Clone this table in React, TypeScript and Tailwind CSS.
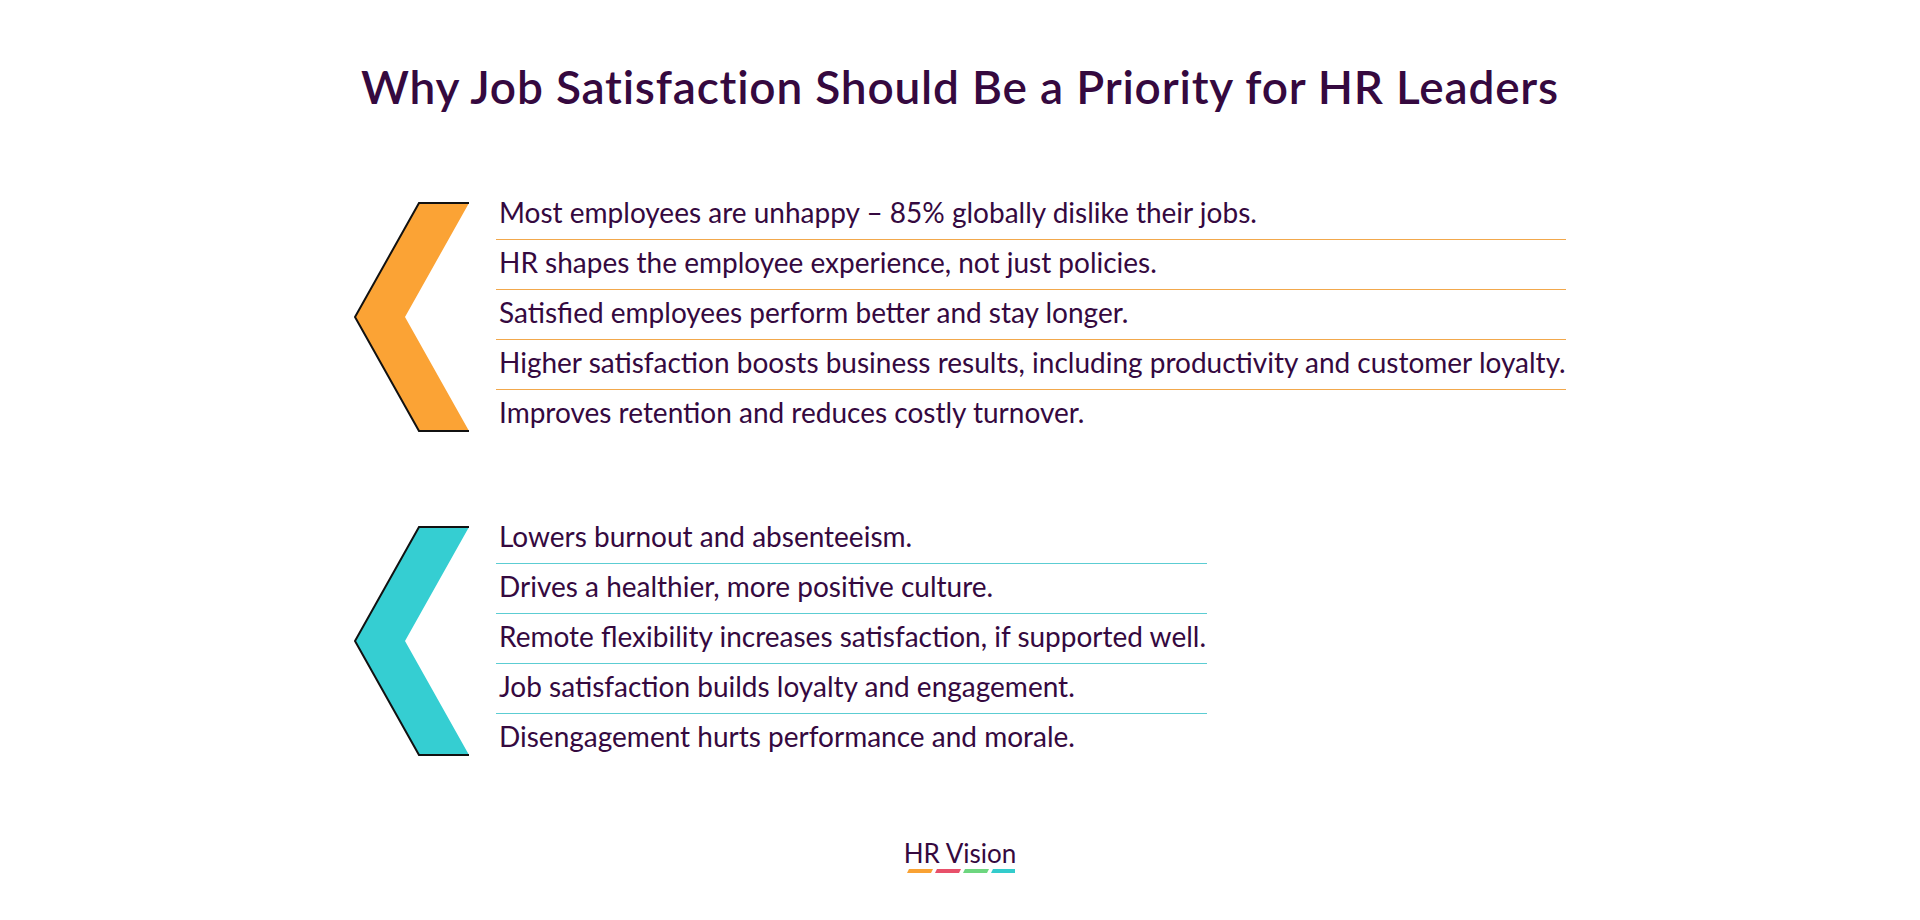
const orangeItems = [
  "Most employees are unhappy – 85% globally dislike their jobs.",
  "HR shapes the employee experience, not just policies.",
  "Satisfied employees perform better and stay longer.",
  "Higher satisfaction boosts business results, including productivity and customer loyalty.",
  "Improves retention and reduces costly turnover.",
]

const tealItems = [
  "Lowers burnout and absenteeism.",
  "Drives a healthier, more positive culture.",
  "Remote flexibility increases satisfaction, if supported well.",
  "Job satisfaction builds loyalty and engagement.",
  "Disengagement hurts performance and morale.",
]

function Chevron({ fill }: { fill: string }) {
  return (
    <svg width="117" height="230" viewBox="0 0 117 230" className="shrink-0 mt-[12px]">
      <polygon points="65,1 115,1 51,115 115,229 65,229 1,115" fill={fill} />
      <polyline
        points="115,1 65,1 1,115 65,229 115,229"
        fill="none"
        stroke="#111"
        strokeWidth="2"
        strokeLinejoin="miter"
      />
    </svg>
  )
}

function Group({ items, fill, line, width }: { items: string[]; fill: string; line: string; width: string }) {
  return (
    <div className="flex items-start gap-[25px]">
      <Chevron fill={fill} />
      <ul className={width}>
        {items.map((item, i) => (
          <li
            key={i}
            className={`pl-[3px] pt-[6px] pb-[10px] text-[28px] leading-[33px] text-[#35093f] whitespace-nowrap ${
              i < items.length - 1 ? "border-b " + line : ""
            }`}
          >
            {item}
          </li>
        ))}
      </ul>
    </div>
  )
}

export default function App() {
  return (
    <div className="w-full h-[920px] bg-white overflow-hidden" style={{ fontFamily: "Lato, 'Noto Sans', sans-serif" }}>
      <h1 className="pt-[59px] text-center text-[46px] leading-[55px] tracking-[0.8px] font-semibold text-[#35093f]">
        Why Job Satisfaction Should Be a Priority for HR Leaders
      </h1>

      <div className="w-[1212px] mx-auto mt-[76px] flex flex-col gap-[75px]">
        <Group items={orangeItems} fill="#fba335" line="border-[#f2a84c]" width="w-[1070px]" />
        <Group items={tealItems} fill="#35ced2" line="border-[#5ccdd3]" width="w-[711px]" />
      </div>

      <div className="mt-[75px] flex flex-col items-center">
        <div className="text-[26px] leading-[31px] text-[#35093f]">HR Vision</div>
        <svg width="110" height="4" viewBox="0 0 110 4">
          <polygon points="2,4 26,4 28,0 4,0" fill="#f9a234" />
          <polygon points="30,4 54,4 56,0 32,0" fill="#e8506a" />
          <polygon points="58,4 82,4 84,0 60,0" fill="#6dd67f" />
          <polygon points="86,4 110,4 112,0 88,0" fill="#33cccc" />
        </svg>
      </div>
    </div>
  )
}
